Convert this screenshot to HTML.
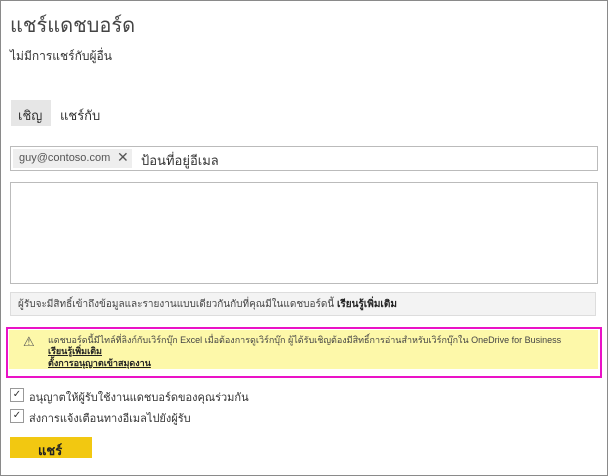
<!DOCTYPE html>
<html><head><meta charset="utf-8"><style>
body{margin:0;width:608px;height:476px;overflow:hidden;background:#fff;font-family:"Liberation Sans","DejaVu Sans",sans-serif;color:#333;position:relative}
.frame{position:absolute;left:0;top:0;width:606px;height:474px;border:1px solid #8a8a8a}
.a{position:absolute;white-space:nowrap}
</style></head><body>
<div class="frame"></div>
<div class="a" style="left:10px;top:9px;font-size:20px;color:#444">แชร์แดชบอร์ด</div>
<div class="a" style="left:10px;top:47px;font-size:12px;color:#333">ไม่มีการแชร์กับผู้อื่น</div>
<div class="a" style="left:11px;top:100px;width:40px;height:26px;background:#e6e6e6"></div>
<div class="a" style="left:18px;top:105px;font-size:13px">เชิญ</div>
<div class="a" style="left:60px;top:105px;font-size:13px">แชร์กับ</div>
<div class="a" style="left:10px;top:146px;width:586px;height:23px;border:1px solid #bbb"></div>
<div class="a" style="left:13px;top:149px;width:119px;height:19px;background:#eee"></div>
<div class="a" style="left:19px;top:152px;font-size:11px;color:#555">guy@contoso.com</div>
<div class="a" style="left:117px;top:149px;font-size:14px;color:#555">✕</div>
<div class="a" style="left:141px;top:150px;font-size:13px;color:#333">ป้อนที่อยู่อีเมล</div>
<div class="a" style="left:10px;top:182px;width:586px;height:100px;border:1px solid #bbb"></div>
<div class="a" style="left:10px;top:292px;width:584px;height:22px;background:#f3f3f3;border:1px solid #ddd"></div>
<div class="a" style="left:18px;top:297px;font-size:10px;color:#444">ผู้รับจะมีสิทธิ์เข้าถึงข้อมูลและรายงานแบบเดียวกันกับที่คุณมีในแดชบอร์ดนี้ <b style="color:#222">เรียนรู้เพิ่มเติม</b></div>
<div class="a" style="left:6px;top:327px;width:592px;height:47px;border:2px solid #ea12c6"></div>
<div class="a" style="left:9px;top:330px;width:589px;height:39px;background:#fdf8a9"></div>
<div class="a" style="left:23px;top:334px;font-size:13px;color:#555">⚠</div>
<div class="a" style="left:48px;top:333px;font-size:9px;color:#444">แดชบอร์ดนี้มีไทล์ที่ลิงก์กับเวิร์กบุ๊ก Excel เมื่อต้องการดูเวิร์กบุ๊ก ผู้ได้รับเชิญต้องมีสิทธิ์การอ่านสำหรับเวิร์กบุ๊กใน OneDrive for Business</div>
<div class="a" style="left:48px;top:344px;font-size:9px;font-weight:bold;text-decoration:underline;color:#222">เรียนรู้เพิ่มเติม</div>
<div class="a" style="left:48px;top:356px;font-size:9px;font-weight:bold;text-decoration:underline;color:#222">ตั้งการอนุญาตเข้าสมุดงาน</div>
<div class="a" style="left:10px;top:388px;width:12px;height:12px;border:1px solid #999;font-size:10px;line-height:12px;text-align:center">✓</div>
<div class="a" style="left:29px;top:388px;font-size:11px">อนุญาตให้ผู้รับใช้งานแดชบอร์ดของคุณร่วมกัน</div>
<div class="a" style="left:10px;top:409px;width:12px;height:12px;border:1px solid #999;font-size:10px;line-height:12px;text-align:center">✓</div>
<div class="a" style="left:29px;top:409px;font-size:11px">ส่งการแจ้งเตือนทางอีเมลไปยังผู้รับ</div>
<div class="a" style="left:10px;top:437px;width:82px;height:21px;background:#f2c811"></div>
<div class="a" style="left:38px;top:440px;font-size:13px;font-weight:bold;color:#222">แชร์</div>
</body></html>
